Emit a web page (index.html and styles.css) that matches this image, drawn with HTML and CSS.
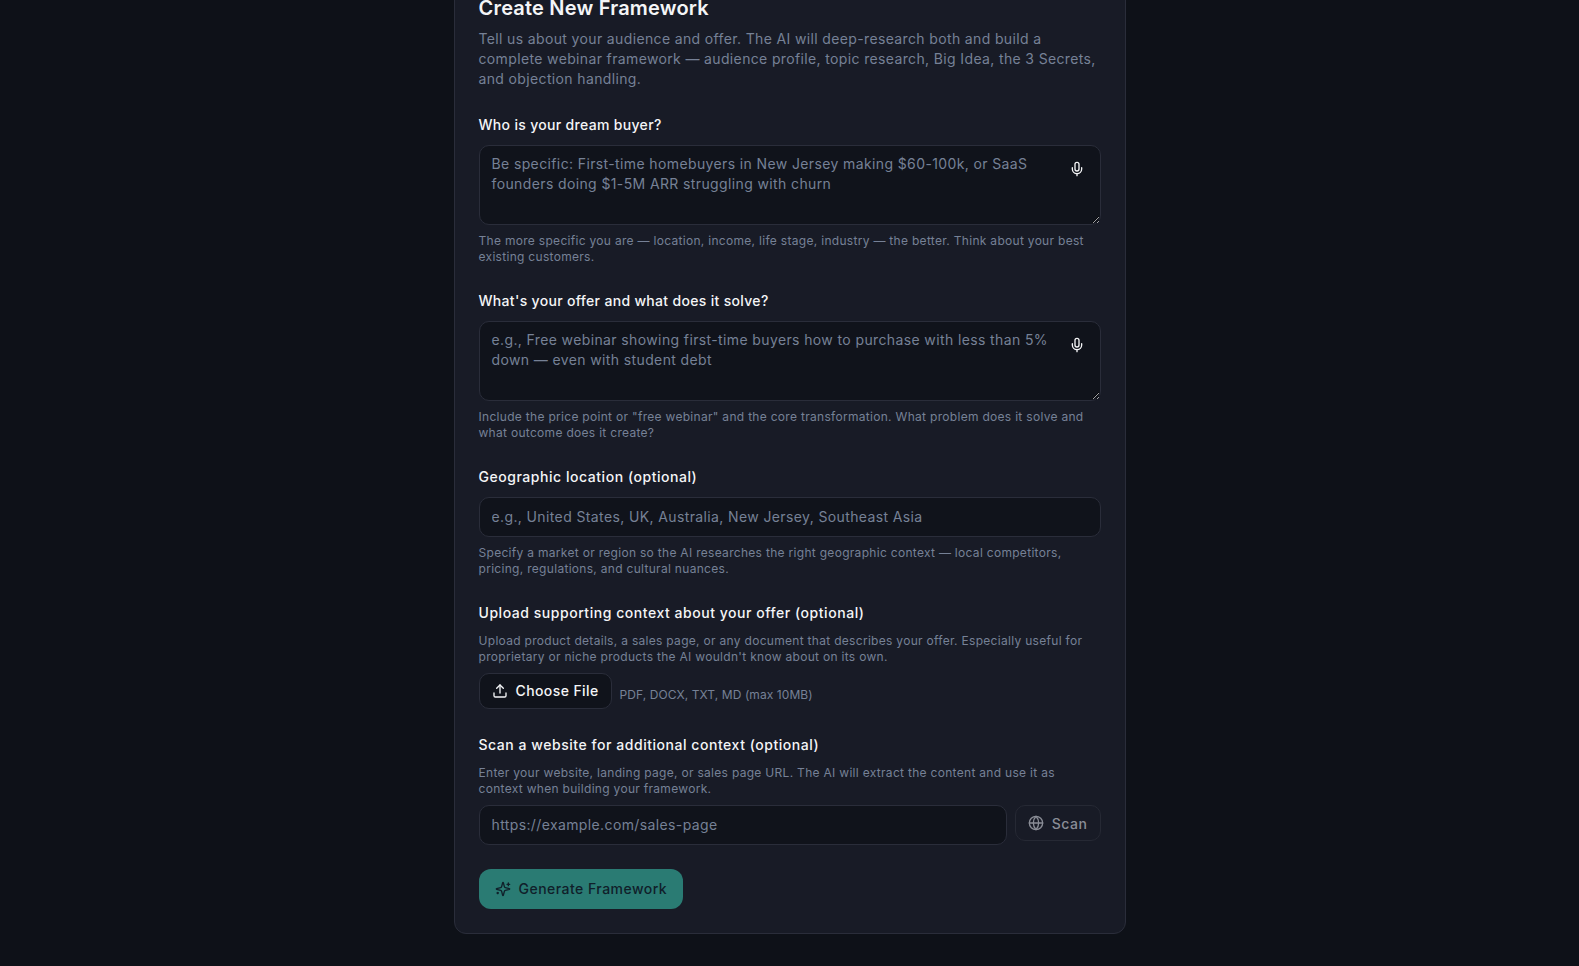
FILE: index.html
```html
<!DOCTYPE html>
<html lang="en">
<head>
<meta charset="utf-8">
<title>Create New Framework</title>
<link rel="stylesheet" href="styles.css">
</head>
<body>
<main class="card">
  <h1 class="title">Create New Framework</h1>
  <p class="intro">Tell us about your audience and offer. The AI will deep-research both and build a complete webinar framework — audience profile, topic research, Big Idea, the 3 Secrets, and objection handling.</p>

  <section class="field">
    <label class="label">Who is your dream buyer?</label>
    <div class="area-wrap">
      <textarea class="input area" rows="3" placeholder="Be specific: First-time homebuyers in New Jersey making $60-100k, or SaaS founders doing $1-5M ARR struggling with churn"></textarea>
      <svg class="mic" viewBox="0 0 24 24"><path d="M12 2a3 3 0 0 0-3 3v7a3 3 0 0 0 6 0V5a3 3 0 0 0-3-3Z"/><path d="M19 10v2a7 7 0 0 1-14 0v-2"/><path d="M12 19v3"/></svg>
    </div>
    <p class="hint">The more specific you are — location, income, life stage, industry — the better. Think about your best existing customers.</p>
  </section>

  <section class="field">
    <label class="label">What's your offer and what does it solve?</label>
    <div class="area-wrap">
      <textarea class="input area" rows="3" placeholder="e.g., Free webinar showing first-time buyers how to purchase with less than 5% down — even with student debt"></textarea>
      <svg class="mic" viewBox="0 0 24 24"><path d="M12 2a3 3 0 0 0-3 3v7a3 3 0 0 0 6 0V5a3 3 0 0 0-3-3Z"/><path d="M19 10v2a7 7 0 0 1-14 0v-2"/><path d="M12 19v3"/></svg>
    </div>
    <p class="hint">Include the price point or "free webinar" and the core transformation. What problem does it solve and what outcome does it create?</p>
  </section>

  <section class="field">
    <label class="label label-wide">Geographic location (optional)</label>
    <input class="input line" type="text" placeholder="e.g., United States, UK, Australia, New Jersey, Southeast Asia">
    <p class="hint">Specify a market or region so the AI researches the right geographic context — local competitors, pricing, regulations, and cultural nuances.</p>
  </section>

  <section class="field">
    <label class="label label-wide">Upload supporting context about your offer (optional)</label>
    <p class="hint hint-top">Upload product details, a sales page, or any document that describes your offer. Especially useful for proprietary or niche products the AI wouldn't know about on its own.</p>
    <div class="upload-row">
      <button class="file-btn" type="button">
        <svg class="icon" viewBox="0 0 24 24"><path d="M12 3v12"/><path d="m17 8-5-5-5 5"/><path d="M21 15v4a2 2 0 0 1-2 2H5a2 2 0 0 1-2-2v-4"/></svg>
        Choose File
      </button>
      <span class="formats">PDF, DOCX, TXT, MD (max 10MB)</span>
    </div>
  </section>

  <section class="field">
    <label class="label label-wide">Scan a website for additional context (optional)</label>
    <p class="hint hint-top">Enter your website, landing page, or sales page URL. The AI will extract the content and use it as context when building your framework.</p>
    <div class="scan-row">
      <input class="input line scan-input" type="text" placeholder="https://example.com/sales-page">
      <button class="scan-btn" type="button">
        <svg class="icon" viewBox="0 0 24 24"><circle cx="12" cy="12" r="10"/><path d="M12 2a14.5 14.5 0 0 0 0 20 14.5 14.5 0 0 0 0-20"/><path d="M2 12h20"/></svg>
        Scan
      </button>
    </div>
  </section>

  <button class="generate" type="button">
    <svg class="icon" viewBox="0 0 24 24"><path d="M9.94 15.5A2 2 0 0 0 8.5 14.06l-6.13-1.58a.5.5 0 0 1 0-.96L8.5 9.94A2 2 0 0 0 9.94 8.5l1.58-6.13a.5.5 0 0 1 .96 0l1.58 6.13a2 2 0 0 0 1.44 1.44l6.13 1.58a.5.5 0 0 1 0 .96l-6.13 1.58a2 2 0 0 0-1.44 1.44l-1.58 6.13a.5.5 0 0 1-.96 0Z"/><path d="M20 3v4"/><path d="M22 5h-4"/><path d="M4 17v2"/><path d="M5 18H3"/></svg>
    Generate Framework
  </button>
</main>
</body>
</html>
```

FILE: styles.css
```css
* { box-sizing: border-box; }
html, body { margin: 0; padding: 0; height: 100%; overflow: hidden; background: #0e1118; }
body, input, textarea, button { font-family: Inter, "Liberation Sans", sans-serif; }

.card {
  width: 672px;
  margin: -37px auto 0;
  padding: 30px 24px 24px;
  background: #181b26;
  border: 1px solid #2a2d3a;
  border-radius: 12px;
}
.title { margin: 0; font-size: 20px; line-height: 28px; font-weight: 600; color: #f4f5f7; letter-spacing: 0.2px; }
.intro { margin: 7px 0 0; font-size: 14px; line-height: 20px; color: #768196; letter-spacing: 0.36px; }

.field { margin-top: 26px; }
.label { display: block; font-size: 14px; line-height: 20px; font-weight: 500; color: #f4f5f7; letter-spacing: 0.32px; }
.label-wide { letter-spacing: 0.54px; }
.hint { margin: 8px 0 0; font-size: 12px; line-height: 16px; color: #768196; letter-spacing: 0.3px; }
.hint-top { margin-top: 10px; }

.input {
  display: block;
  width: 100%;
  background: #10131b;
  border: 1px solid #2a2d3a;
  border-radius: 10px;
  color: #f4f5f7;
  font-size: 14px;
  line-height: 20px;
  letter-spacing: 0.38px;
  outline: none;
}
.input::placeholder { color: #768196; opacity: 1; }
.area-wrap { position: relative; margin-top: 10px; }
.area { height: 80px; padding: 8px 48px 8px 12px; resize: vertical; }
.line { height: 40px; padding: 7px 12px 9px; margin-top: 10px; }
.mic { position: absolute; top: 16px; right: 16px; width: 16px; height: 16px; fill: none; stroke: #f4f5f7; stroke-width: 2; stroke-linecap: round; stroke-linejoin: round; }
.icon { width: 16px; height: 16px; flex: none; fill: none; stroke: currentColor; stroke-width: 2; stroke-linecap: round; stroke-linejoin: round; }

.upload-row { display: flex; align-items: flex-end; gap: 8px; margin-top: 8px; }
.file-btn {
  display: flex; align-items: center; gap: 8px;
  height: 36px; padding: 0 12px 1px;
  background: #10131b; border: 1px solid #2a2d3a; border-radius: 10px;
  color: #f4f5f7; font-size: 14px; font-weight: 500; letter-spacing: 0.4px;
}
.formats { font-size: 12px; line-height: 16px; padding-bottom: 6px; color: #768196; letter-spacing: 0.08px; }

.scan-row { display: flex; align-items: flex-start; gap: 8px; margin-top: 8px; }
.scan-input { flex: 1; margin-top: 0; }
.scan-btn {
  display: flex; align-items: center; gap: 8px;
  height: 36px; padding: 0 12px;
  background: #181b26; border: 1px solid #262934; border-radius: 10px;
  color: #8a8d96; font-size: 14px; font-weight: 500; letter-spacing: 0.55px;
}
.generate {
  display: flex; align-items: center; gap: 8px;
  height: 40px; margin-top: 24px; padding: 0 16px 1px;
  background: #2a7b73; border: 0; border-radius: 12px;
  color: #10202a; font-size: 14px; font-weight: 500; letter-spacing: 0.47px;
}
```
